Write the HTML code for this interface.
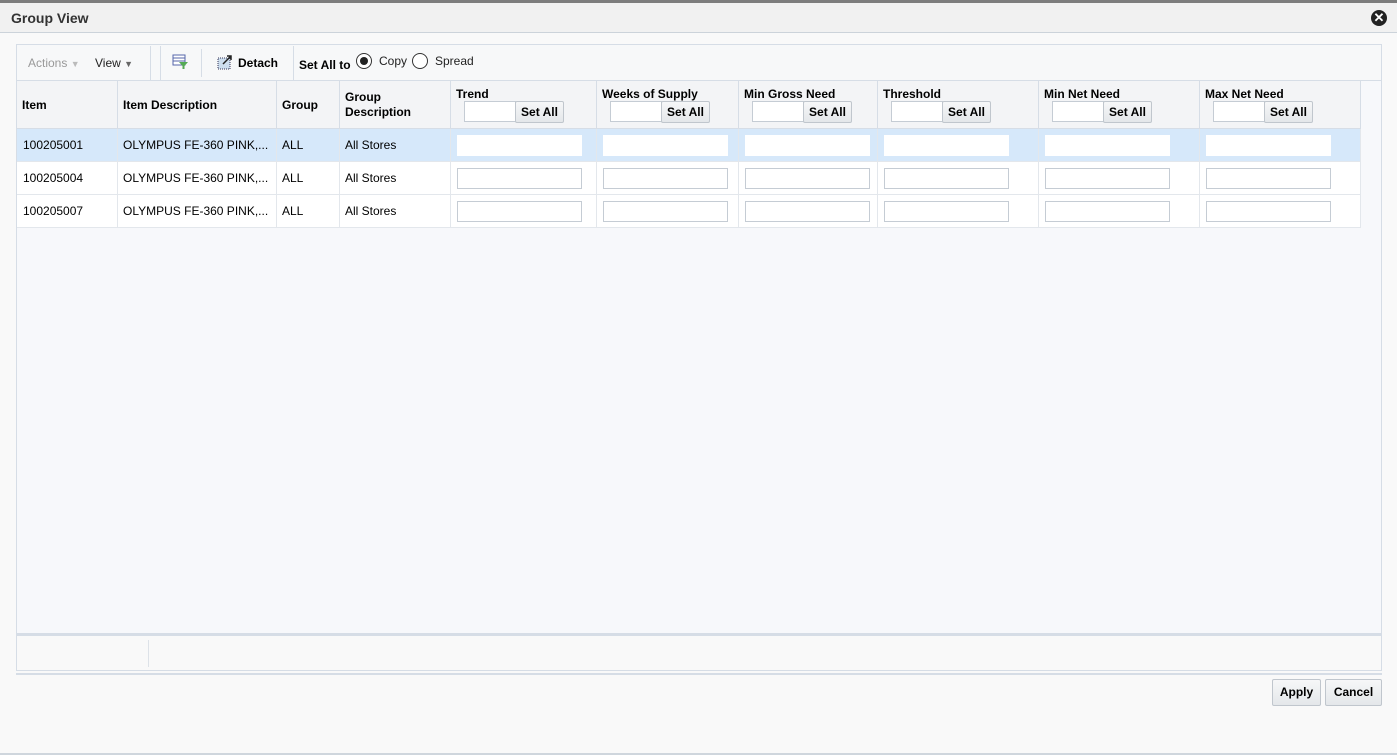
<!DOCTYPE html><html><head><style>
*{box-sizing:border-box}
body{margin:0;width:1397px;height:755px;background:#f9f9f9;font-family:"Liberation Sans",Arial,sans-serif;font-size:12px;color:#000;position:relative;overflow:hidden}
.a{position:absolute}
.b{font-weight:bold}
.hd{position:absolute;top:81px;height:47px;border-right:1px solid #d6dde6;background:#f3f4f6;font-weight:bold}
.cell{position:absolute;height:33px;border-right:1px solid #e3e7ec;border-bottom:1px solid #e3e7ec;line-height:32px;padding-left:6px}
.inp{position:absolute;background:#fff;border:1px solid #c5ccd4;height:21px}
.btn{position:absolute;background:linear-gradient(#f6f7f8,#e4e7ea);border:1px solid #c0c6cd;border-radius:2px;font-weight:bold;text-align:center}
</style></head><body>
<div class="a" style="left:0;top:0;width:1397px;height:3px;background:#7d7d7d"></div>
<div class="a" style="left:0;top:3px;width:1397px;height:30px;background:#f1f1f1;border-bottom:1px solid #ccd3da"></div>
<div class="a b" style="left:11px;top:10px;font-size:14px;color:#333">Group View</div>
<div class="a" style="left:1371px;top:10px;width:16px;height:16px;border-radius:50%;background:#222;color:#fff;font-size:13px;line-height:16px;text-align:center;font-weight:bold">✕</div>
<div class="a" style="left:16px;top:44px;width:1366px;height:591px;border:1px solid #d6dde6;background:#f7f8fb"></div>
<div class="a" style="left:17px;top:45px;width:1364px;height:36px;background:#f7f8f9;border-bottom:1px solid #d6dde6"></div>
<div class="a" style="left:28px;top:56px;color:#999">Actions <span style="font-size:9px;color:#bbb">▼</span></div>
<div class="a" style="left:95px;top:56px;color:#222">View <span style="font-size:9px;color:#666">▼</span></div>
<div class="a" style="left:150px;top:46px;width:1px;height:34px;background:#d6dde6"></div>
<div class="a" style="left:160px;top:46px;width:1px;height:34px;background:#d6dde6"></div>
<svg class="a" style="left:172px;top:54px" width="17" height="16"><rect x="1" y="1" width="12" height="10" fill="#fff" stroke="#5566aa"/><line x1="1" y1="4" x2="13" y2="4" stroke="#5566aa"/><line x1="1" y1="7" x2="13" y2="7" stroke="#5566aa"/><path d="M7 8h9l-3.5 4v3h-2v-3z" fill="#5a5" /></svg>
<div class="a" style="left:201px;top:49px;width:1px;height:28px;background:#d6dde6"></div>
<svg class="a" style="left:217px;top:54px" width="16" height="16"><rect x="1" y="4" width="12" height="11" fill="#cde" stroke="#335" stroke-dasharray="1,1"/><path d="M6 10L14 2M10 2h4v4" stroke="#222" stroke-width="1.5" fill="none"/></svg>
<div class="a b" style="left:238px;top:56px">Detach</div>
<div class="a" style="left:293px;top:46px;width:1px;height:34px;background:#d6dde6"></div>
<div class="a b" style="left:299px;top:58px">Set All to</div>
<div class="a" style="left:356px;top:53px;width:16px;height:16px;border:1px solid #333;border-radius:50%;background:#fff"><div style="margin:3px;width:8px;height:8px;border-radius:50%;background:#222"></div></div>
<div class="a" style="left:379px;top:54px;color:#222">Copy</div>
<div class="a" style="left:412px;top:53px;width:16px;height:16px;border:1px solid #333;border-radius:50%;background:#fff"></div>
<div class="a" style="left:435px;top:54px;color:#222">Spread</div>

<div class="hd" style="left:17px;width:101px"><span class="a" style="left:5px;top:17px">Item</span></div>
<div class="hd" style="left:118px;width:159px"><span class="a" style="left:5px;top:17px">Item Description</span></div>
<div class="hd" style="left:277px;width:63px"><span class="a" style="left:5px;top:17px">Group</span></div>
<div class="hd" style="left:340px;width:111px"><span class="a" style="left:5px;top:9px;line-height:15px">Group<br>Description</span></div>
<div class="hd" style="left:451px;width:146px"><span class="a" style="left:5px;top:6px">Trend</span></div>
<div class="hd" style="left:597px;width:142px"><span class="a" style="left:5px;top:6px">Weeks of Supply</span></div>
<div class="hd" style="left:739px;width:139px"><span class="a" style="left:5px;top:6px">Min Gross Need</span></div>
<div class="hd" style="left:878px;width:161px"><span class="a" style="left:5px;top:6px">Threshold</span></div>
<div class="hd" style="left:1039px;width:161px"><span class="a" style="left:5px;top:6px">Min Net Need</span></div>
<div class="hd" style="left:1200px;width:161px"><span class="a" style="left:5px;top:6px">Max Net Need</span></div>
<div class="a" style="left:17px;top:128px;width:1344px;height:1px;background:#d6dde6"></div>

<div class="inp" style="left:464px;top:101px;width:52px"></div><div class="btn" style="left:515px;top:101px;width:49px;height:22px;line-height:20px">Set All</div>
<div class="inp" style="left:610px;top:101px;width:52px"></div><div class="btn" style="left:661px;top:101px;width:49px;height:22px;line-height:20px">Set All</div>
<div class="inp" style="left:752px;top:101px;width:52px"></div><div class="btn" style="left:803px;top:101px;width:49px;height:22px;line-height:20px">Set All</div>
<div class="inp" style="left:891px;top:101px;width:52px"></div><div class="btn" style="left:942px;top:101px;width:49px;height:22px;line-height:20px">Set All</div>
<div class="inp" style="left:1052px;top:101px;width:52px"></div><div class="btn" style="left:1103px;top:101px;width:49px;height:22px;line-height:20px">Set All</div>
<div class="inp" style="left:1213px;top:101px;width:52px"></div><div class="btn" style="left:1264px;top:101px;width:49px;height:22px;line-height:20px">Set All</div>

<div class="a" style="left:17px;top:129px;width:1344px;height:32px;background:#d6e8fa"></div>
<div class="a" style="left:17px;top:162px;width:1344px;height:66px;background:#fff"></div>
<div id="rows"></div>
<script>
var ids=["100205001","100205004","100205007"],h="";
var inx=[457,603,745,884,1045,1206];
var sep=[117,276,339,450,596,738,877,1038,1199,1360];
for(var r=0;r<3;r++){var y=129+r*33;
h+='<div class="a" style="left:23px;top:'+(y+9)+'px">'+ids[r]+'</div>';
h+='<div class="a" style="left:123px;top:'+(y+9)+'px">OLYMPUS FE-360 PINK,...</div>';
h+='<div class="a" style="left:282px;top:'+(y+9)+'px">ALL</div>';
h+='<div class="a" style="left:345px;top:'+(y+9)+'px">All Stores</div>';
for(var i=0;i<6;i++)h+='<div class="inp" style="left:'+inx[i]+'px;top:'+(y+6)+'px;width:125px;'+(r==0?'border-color:#fff':'')+'"></div>';
h+='<div class="a" style="left:17px;top:'+(y+32)+'px;width:1344px;height:1px;background:#e3e7ec"></div>';
}
for(var j=0;j<sep.length;j++)h+='<div class="a" style="left:'+sep[j]+'px;top:129px;width:1px;height:99px;background:#e3e7ec"></div>';
document.getElementById("rows").innerHTML=h;
</script>
<div class="a" style="left:16px;top:633px;width:1366px;height:3px;background:#d6dde6"></div>
<div class="a" style="left:16px;top:636px;width:1366px;height:35px;background:#f9f9f9;border:1px solid #d6dde6;border-top:none"></div>
<div class="a" style="left:148px;top:640px;width:1px;height:27px;background:#dde2e8"></div>
<div class="a" style="left:16px;top:673px;width:1366px;height:2px;background:#d6dde6"></div>
<div class="btn" style="left:1272px;top:679px;width:49px;height:27px;line-height:25px">Apply</div>
<div class="btn" style="left:1325px;top:679px;width:57px;height:27px;line-height:25px">Cancel</div>
<div class="a" style="left:0;top:753px;width:1397px;height:2px;background:#cfd6dd"></div>
</body></html>
